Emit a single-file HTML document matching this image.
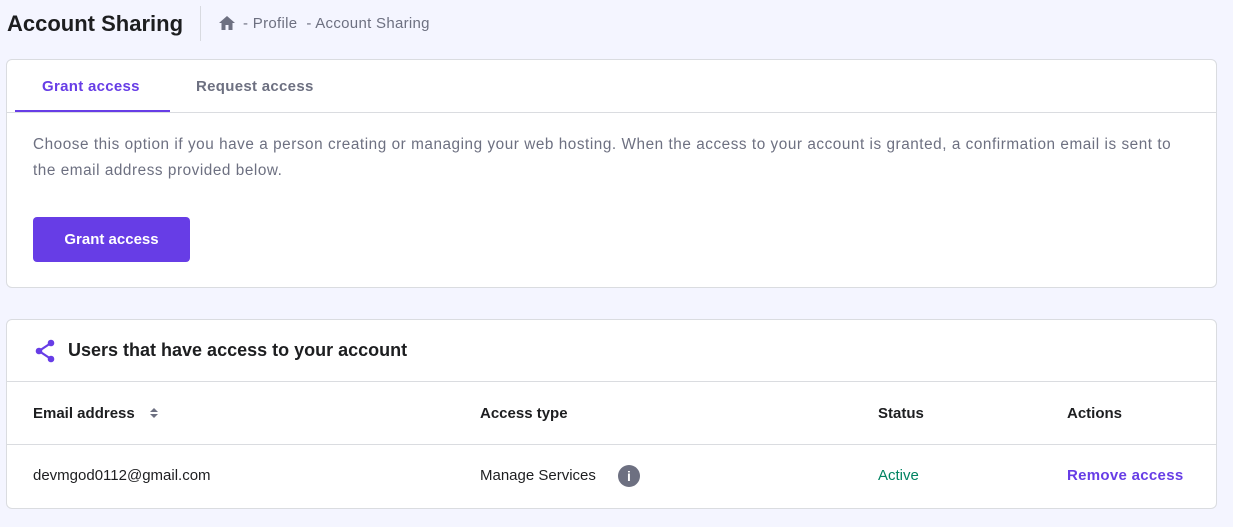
<!DOCTYPE html>
<html><head><style>
body{margin:0;background:#f4f5ff;font-family:"Liberation Sans",sans-serif;width:1233px;height:527px;position:relative;overflow:hidden;color:#1d1e20}
.a{position:absolute}
.card{position:absolute;left:6px;width:1209px;background:#fff;border:1px solid #dadce0;border-radius:6px}
</style></head><body>
<div class="a" style="left:7px;top:11px;font-size:22px;font-weight:bold;color:#1d1e20">Account Sharing</div>
<div class="a" style="left:200px;top:6px;width:1px;height:35px;background:#d8dae0"></div>
<svg class="a" style="left:218px;top:15px" width="18" height="16" viewBox="0 0 18 16"><path d="M9 1L1 8h2.5v7h4v-5h3v5h4V8H17z" fill="#6d7081"/></svg>
<div class="a" style="left:243px;top:15px;font-size:15px;letter-spacing:0.3px;color:#6d7081">- Profile &nbsp;- Account Sharing</div>

<div class="card" style="top:59px;height:227px">
  <div class="a" style="left:35px;top:18px;font-size:15px;font-weight:bold;letter-spacing:0.3px;color:#673de6">Grant access</div>
  <div class="a" style="left:189px;top:18px;font-size:15px;font-weight:bold;letter-spacing:0.3px;color:#6d7081">Request access</div>
  <div class="a" style="left:8px;top:50px;width:155px;height:3px;background:#673de6"></div>
  <div class="a" style="left:0;top:52px;width:1209px;height:1px;background:#dadce0"></div>
  <div class="a" style="left:26px;top:72px;width:1165px;font-size:15.3px;letter-spacing:0.55px;line-height:26px;color:#6d7081">Choose this option if you have a person creating or managing your web hosting. When the access to your account is granted, a confirmation email is sent to the email address provided below.</div>
  <div class="a" style="left:26px;top:157px;width:157px;height:45px;background:#673de6;border-radius:4px;color:#fff;font-size:15px;font-weight:bold;line-height:45px;text-align:center">Grant access</div>
</div>

<div class="card" style="top:319px;height:188px">
  <svg class="a" style="left:27px;top:19px" width="22" height="24" viewBox="0 0 22 24"><g fill="#673de6"><circle cx="17" cy="4" r="3.3"/><circle cx="17" cy="20" r="3.3"/><circle cx="5" cy="12" r="3.3"/></g><path d="M17 4L5 12l12 8" stroke="#673de6" stroke-width="2.2" fill="none"/></svg>
  <div class="a" style="left:61px;top:20px;font-size:18px;font-weight:bold">Users that have access to your account</div>
  <div class="a" style="left:0;top:61px;width:1209px;height:1px;background:#dadce0"></div>
  <div class="a" style="left:26px;top:85px;font-size:15px;font-weight:bold">Email address</div>
  <svg class="a" style="left:142px;top:87px" width="10" height="12" viewBox="0 0 10 12"><path d="M5 1L9 5H1zM5 11L1 7h8z" fill="#6d7081"/></svg>
  <div class="a" style="left:473px;top:85px;font-size:15px;font-weight:bold">Access type</div>
  <div class="a" style="left:871px;top:85px;font-size:15px;font-weight:bold">Status</div>
  <div class="a" style="left:1060px;top:85px;font-size:15px;font-weight:bold">Actions</div>
  <div class="a" style="left:0;top:124px;width:1209px;height:1px;background:#dadce0"></div>
  <div class="a" style="left:26px;top:147px;font-size:15px">devmgod0112@gmail.com</div>
  <div class="a" style="left:473px;top:147px;font-size:15px">Manage Services</div>
  <div class="a" style="left:611px;top:145px;width:22px;height:22px;border-radius:50%;background:#6d7081;color:#fff;font-size:14px;font-weight:bold;text-align:center;line-height:22px">i</div>
  <div class="a" style="left:871px;top:147px;font-size:15px;color:#008361">Active</div>
  <div class="a" style="left:1060px;top:147px;font-size:15px;font-weight:bold;letter-spacing:0.3px;color:#673de6">Remove access</div>
</div>
</body></html>
